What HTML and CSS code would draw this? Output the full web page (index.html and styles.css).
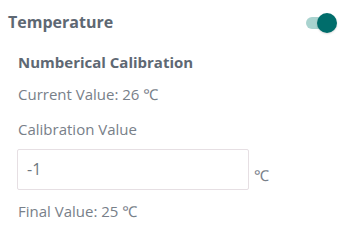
FILE: index.html
```html
<!DOCTYPE html>
<html>
<head>
<meta charset="utf-8">
<link rel="stylesheet" href="styles.css">
</head>
<body>
<div class="panel">
  <div class="header">
    <span class="title">Temperature</span>
    <span class="switch"><span class="track"></span><span class="knob"></span></span>
  </div>
  <div class="section">
    <div class="subtitle">Numberical Calibration</div>
    <div class="line current">Current Value: 26 ℃</div>
    <div class="line label">Calibration Value</div>
    <div class="input-row">
      <div class="input">-1</div>
      <span class="unit">℃</span>
    </div>
    <div class="line final">Final Value: 25 ℃</div>
  </div>
</div>
</body>
</html>
```
FILE: styles.css
```css
html, body {
  margin: 0;
  padding: 0;
  background: #ffffff;
}
body {
  width: 358px;
  height: 242px;
  overflow: hidden;
  font-family: "Open Sans", "Noto Sans", sans-serif;
  color: #788089;
}
.panel {
  padding: 8px 0 0 8px;
}
.header {
  display: flex;
  align-items: center;
  justify-content: space-between;
  width: 329px;
  height: 28px;
}
.title {
  font-size: 16px;
  font-weight: 700;
  color: #5e6873;
}
.switch {
  position: relative;
  width: 31px;
  height: 20px;
  margin-top: 2px;
}
.track {
  position: absolute;
  left: 0;
  top: 4px;
  width: 28px;
  height: 12px;
  border-radius: 6px;
  background: #a9d3cf;
}
.knob {
  position: absolute;
  right: 0;
  top: 0;
  width: 20px;
  height: 20px;
  border-radius: 50%;
  background: #006d6b;
  box-shadow: 0 1px 2px rgba(0,0,0,0.15);
}
.section {
  padding-left: 10px;
  padding-top: 16px;
}
.subtitle {
  font-size: 15px;
  font-weight: 700;
  color: #5e6873;
  line-height: 20px;
}
.line {
  font-size: 15px;
  line-height: 20px;
}
.current {
  margin-top: 12px;
}
.label {
  margin-top: 15px;
}
.input-row {
  display: flex;
  align-items: flex-end;
  margin-top: 10px;
  margin-left: -1px;
}
.input {
  box-sizing: border-box;
  width: 232px;
  height: 41px;
  border: 1px solid #e6dfe3;
  border-radius: 2px;
  padding: 0 9px;
  font-size: 16px;
  line-height: 39px;
  color: #6e7780;
}
.unit {
  font-size: 15px;
  line-height: 20px;
  margin-left: 5px;
  margin-bottom: 5px;
}
.final {
  margin-top: 11px;
}
```
